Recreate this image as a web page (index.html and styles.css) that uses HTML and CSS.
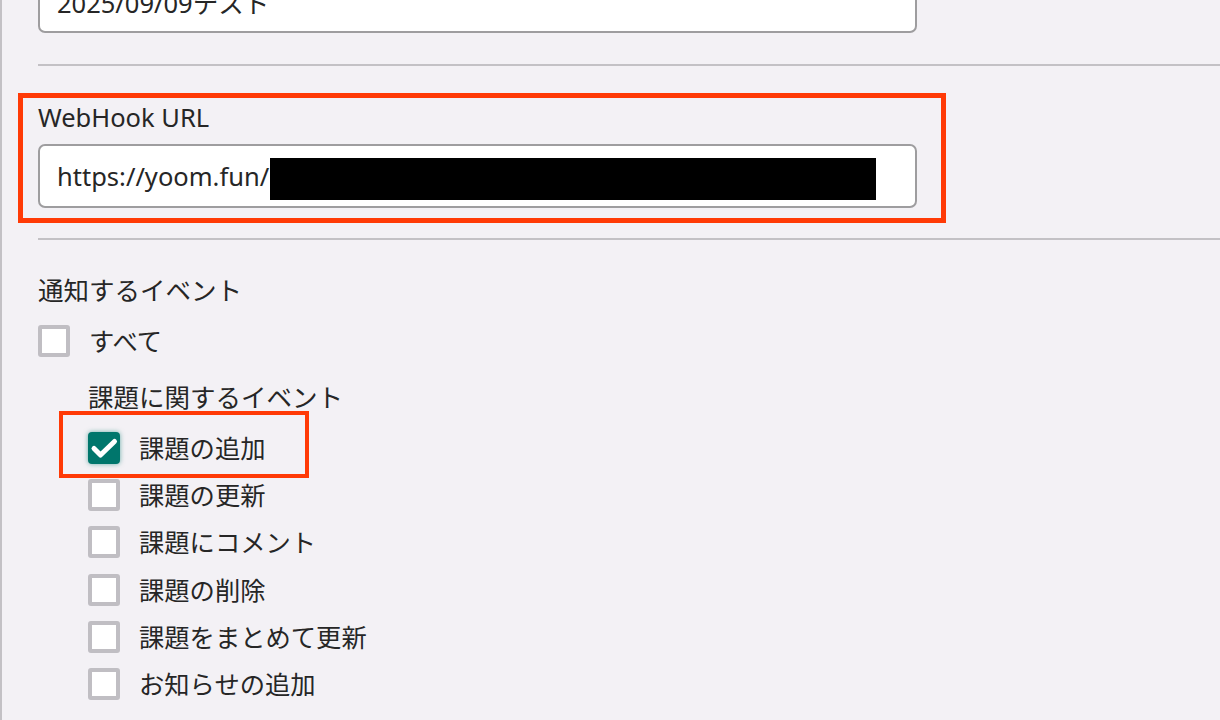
FILE: index.html
```html
<!DOCTYPE html>
<html lang="ja">
<head>
    <meta charset="UTF-8">
    <meta name="viewport" content="width=device-width, initial-scale=1.0">
    <title>WebHook設定</title>
    <link rel="stylesheet" href="styles.css">
</head>
<body>
    <div class="settings-panel">
        <div class="text-field field-top">2025/09/09テスト</div>

        <div class="divider"></div>

        <div class="callout-box">
            <div class="field-label">WebHook URL</div>
            <div class="text-field">
                https://yoom.fun/<span class="redacted"></span>
            </div>
        </div>

        <div class="divider divider-lower"></div>

        <div class="field-label events-title">通知するイベント</div>

        <label class="check-row all-row">
            <span class="check-box"></span>
            <span class="check-text">すべて</span>
        </label>

        <div class="event-group">
            <div class="group-title">課題に関するイベント</div>
            <div class="event-list">
                <label class="check-row highlighted">
                    <span class="check-box checked">
                        <svg width="32" height="32" viewBox="0 0 32 32">
                            <path d="M6 16.5 L12.5 23 L26.5 9.5" fill="none" stroke="#fff" stroke-width="5" stroke-linecap="round" stroke-linejoin="round"/>
                        </svg>
                    </span>
                    <span class="check-text">課題の追加</span>
                </label>
                <label class="check-row">
                    <span class="check-box"></span>
                    <span class="check-text">課題の更新</span>
                </label>
                <label class="check-row">
                    <span class="check-box"></span>
                    <span class="check-text">課題にコメント</span>
                </label>
                <label class="check-row">
                    <span class="check-box"></span>
                    <span class="check-text">課題の削除</span>
                </label>
                <label class="check-row">
                    <span class="check-box"></span>
                    <span class="check-text">課題をまとめて更新</span>
                </label>
                <label class="check-row">
                    <span class="check-box"></span>
                    <span class="check-text">お知らせの追加</span>
                </label>
            </div>
        </div>
    </div>
</body>
</html>
```

FILE: styles.css
```css
* {
    margin: 0;
    padding: 0;
    box-sizing: border-box;
}

body {
    font-family: 'Noto Sans', 'Noto Sans CJK JP', sans-serif;
    background: #f3f1f5;
    color: #262626;
    height: 720px;
    overflow: hidden;
}

.settings-panel {
    display: flow-root;
    border-left: 2px solid #c3c1c5;
    padding-left: 36px;
    min-height: 720px;
}

.text-field {
    width: 879px;
    height: 64px;
    background: #fff;
    border: 2px solid #9e9d9f;
    border-radius: 7px;
    padding: 0 17px;
    display: flex;
    align-items: center;
    font-size: 25.5px;
    white-space: nowrap;
}

.field-top {
    margin-top: -31px;
}

.redacted {
    display: inline-block;
    width: 606px;
    height: 42px;
    background: #000;
    margin: 6px 0 0 1px;
}

.divider {
    height: 2px;
    background: #c3c1c5;
    margin-top: 31px;
}

.divider-lower {
    margin-top: 15px;
}

.callout-box {
    width: 928px;
    margin: 27px 0 0 -20px;
    border: 5px solid #ff3a06;
    padding: 2px 0 10px 15px;
}

.field-label {
    font-size: 25.5px;
    line-height: 34px;
    margin-bottom: 10px;
}

.events-title {
    margin: 33px 0 18px;
}

.check-row {
    display: flex;
    align-items: center;
    gap: 19px;
    height: 32px;
    font-size: 25.3px;
    position: relative;
}

.check-box {
    width: 32px;
    height: 32px;
    flex-shrink: 0;
    background: #fff;
    border: 4px solid #c0bec3;
    border-radius: 3px;
}

.check-box.checked {
    background: #00766c;
    border: none;
    border-radius: 4px;
    box-shadow: 0 0 5px rgba(0, 118, 108, 0.55);
}

.check-box svg {
    display: block;
}

.check-text {
    line-height: 32px;
    white-space: nowrap;
}

.event-group {
    padding-left: 50px;
    margin-top: 23px;
}

.group-title {
    font-size: 25.5px;
    line-height: 34px;
    margin-bottom: 18px;
}

.event-list {
    display: flex;
    flex-direction: column;
    gap: 15.2px;
}

/* annotation frame around the selected event */
.highlighted::after {
    content: '';
    box-sizing: border-box;
    position: absolute;
    left: -29px;
    top: -21px;
    width: 250px;
    height: 67px;
    border: 4px solid #ff3a06;
}
```
